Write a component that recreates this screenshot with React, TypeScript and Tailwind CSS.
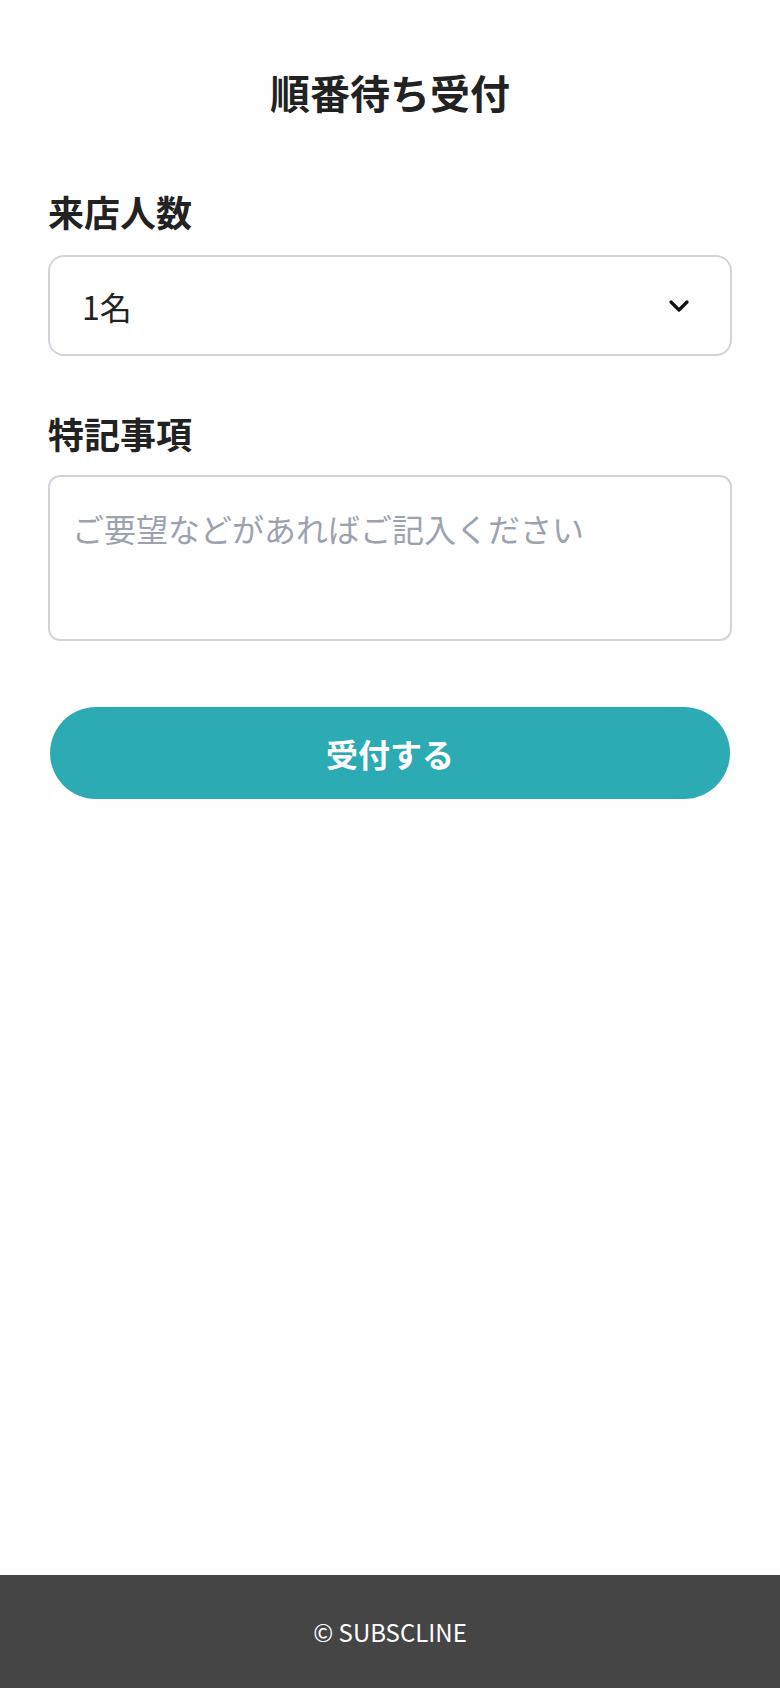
import React from "react";

export default function App() {
  return (
    <div
      className="min-h-screen flex flex-col bg-white text-[#222222]"
      style={{ fontFamily: '"Noto Sans CJK JP", "Noto Sans", sans-serif' }}
    >
      <main className="flex-1 px-12">
        <h1 className="pt-[62px] text-center text-[40px] leading-[60px] font-bold">順番待ち受付</h1>

        <div className="mt-[62px]">
          <label className="block text-[36px] leading-[54px] font-bold">来店人数</label>
          <div className="mt-[17px] relative h-[101px] rounded-[16px] border-2 border-[#d1d5db] flex items-center pl-[32px] pr-[40px]">
            <span className="text-[32px] leading-none">1名</span>
            <svg
              className="absolute right-[39px] top-1/2 -translate-y-1/2"
              width="24"
              height="24"
              viewBox="0 0 24 24"
              fill="none"
              stroke="#111"
              strokeWidth="3.2"
              strokeLinecap="round"
              strokeLinejoin="round"
            >
              <path d="M4 8l8 8 8-8" />
            </svg>
          </div>
        </div>

        <div className="mt-[50px]">
          <label className="block text-[36px] leading-[54px] font-bold">特記事項</label>
          <div className="mt-[15px] h-[166px] rounded-[12px] border-2 border-[#d1d5db] px-[22px] pt-[27px]">
            <span className="text-[32px] leading-[48px] text-[#9ca3af]">ご要望などがあればご記入ください</span>
          </div>
        </div>

        <button className="mt-[66px] w-[680px] ml-[2px] h-[92px] rounded-full bg-[#2dabb5] text-white text-[32px] font-bold flex items-center justify-center">
          受付する
        </button>
      </main>

      <footer className="h-[113px] bg-[#454545] flex items-center justify-center">
        <span className="text-white text-[24px]">© SUBSCLINE</span>
      </footer>
    </div>
  );
}
